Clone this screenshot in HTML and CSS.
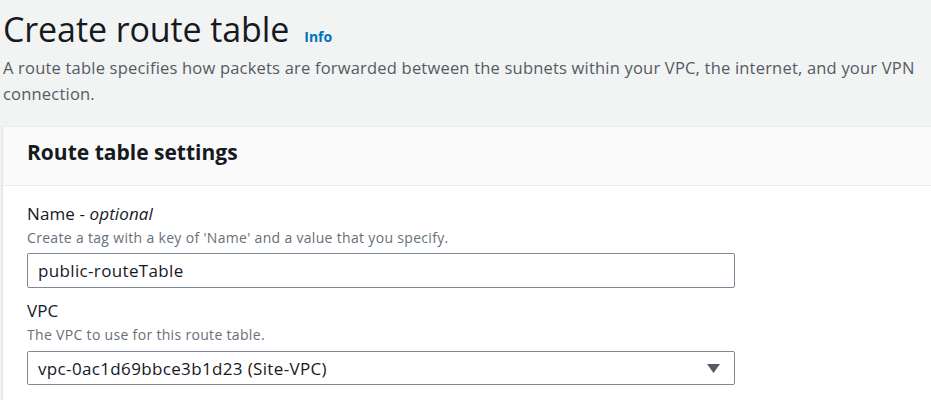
FILE: index.html
```html
<!DOCTYPE html>
<html lang="en">
<head>
<meta charset="utf-8">
<title>Create route table</title>
<link rel="stylesheet" href="styles.css">
</head>
<body>
<main class="page">
  <header class="page-header">
    <div class="title-row">
      <h1 class="title">Create route table</h1>
      <a class="info-link" href="#">Info</a>
    </div>
    <p class="page-desc">A route table specifies how packets are forwarded between the subnets within your VPC, the internet, and your VPN connection.</p>
  </header>
  <section class="card">
    <div class="card-header">
      <h2 class="card-title">Route table settings</h2>
    </div>
    <div class="card-body">
      <div class="field">
        <label class="field-label">Name - <i>optional</i></label>
        <div class="field-desc">Create a tag with a key of 'Name' and a value that you specify.</div>
        <div class="input">public-routeTable</div>
      </div>
      <div class="field field-vpc">
        <label class="field-label">VPC</label>
        <div class="field-desc">The VPC to use for this route table.</div>
        <div class="input select">
          <span>vpc-0ac1d69bbce3b1d23 (Site-VPC)</span>
          <svg class="caret" width="13" height="9" viewBox="0 0 13 9"><path d="M0 0 H13 L6.5 9 Z" fill="#545b64"/></svg>
        </div>
      </div>
    </div>
  </section>
</main>
</body>
</html>
```

FILE: styles.css
```css
html, body {
  margin: 0;
  padding: 0;
  background: #f2f3f3;
  font-family: "Open Sans", "Noto Sans", sans-serif;
  color: #16191f;
}

.page {
  padding-left: 2px;
  overflow: hidden;
  height: 400px;
}

.page-header {
  padding-top: 9px;
  padding-left: 1px;
}

.title-row {
  display: flex;
  align-items: baseline;
  gap: 15px;
}

.title {
  margin: 0;
  font-size: 34px;
  line-height: 40px;
  font-weight: 400;
  letter-spacing: -0.1px;
  color: #16191f;
}

.info-link {
  font-size: 14px;
  font-weight: 700;
  color: #0073bb;
  text-decoration: none;
}

.page-desc {
  margin: 6px 0 0;
  font-size: 16.5px;
  line-height: 26px;
  letter-spacing: 0.2px;
  color: #545b64;
}

.card {
  margin-top: 19px;
  width: 960px;
  background: #ffffff;
  border-top: 1px solid #eaeded;
  border-left: 1px solid #e1e4e4;
  box-shadow: 0 1px 1px rgba(0, 28, 36, 0.15);
}

.card-header {
  background: #fafafa;
  border-bottom: 1px solid #eaeded;
  padding: 11px 24px 19px;
}

.card-title {
  margin: 0;
  font-size: 21px;
  line-height: 28px;
  font-weight: 700;
  color: #16191f;
}

.card-body {
  padding: 17px 24px 20px;
}

.field {
  display: flex;
  flex-direction: column;
  width: 708px;
}

.field-vpc {
  margin-top: 12px;
}

.field-label {
  font-size: 17px;
  line-height: 22px;
  letter-spacing: 0.1px;
  color: #16191f;
}

.field-desc {
  margin-top: 3px;
  font-size: 14px;
  line-height: 20px;
  letter-spacing: 0.32px;
  color: #687078;
}

.input {
  margin-top: 5px;
  box-sizing: border-box;
  height: 35px;
  padding: 0 10px;
  display: flex;
  align-items: center;
  justify-content: space-between;
  border: 1px solid #7d8998;
  border-radius: 2px;
  background: #ffffff;
  font-size: 17px;
  letter-spacing: 0.35px;
  color: #16191f;
}

.select {
  margin-top: 6px;
  height: 34px;
  padding-right: 14px;
}

.caret {
  display: block;
}
```
